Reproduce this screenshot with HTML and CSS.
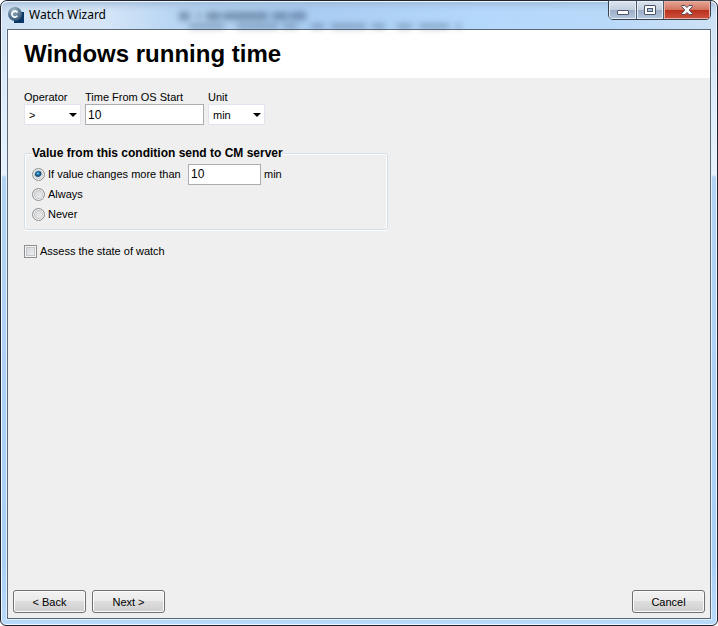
FILE: index.html
```html
<!DOCTYPE html>
<html lang="en">
<head>
<meta charset="utf-8">
<title>Watch Wizard</title>
<link rel="stylesheet" href="styles.css">
</head>
<body>
<div class="window">
  <header class="titlebar">
    <svg class="backdrop" width="300" height="26" viewBox="0 0 300 26" aria-hidden="true">
      <g fill="none" stroke="#3f5876">
        <path stroke-width="8" opacity=".55" d="M10 14H21M28 14H31M37 14H52M54 14H99M103 14H119M121 14H137"/>
        <path stroke-width="5" opacity=".6" d="M20 25H55M68 25H109M114 25H128M142 25H155M162 25H197M203 25H216M228 25H243M250 25H280M287 25H292"/>
      </g>
    </svg>
    <svg class="app-icon" width="16" height="16" viewBox="0 0 16 16" aria-hidden="true">
      <defs>
        <radialGradient id="ball" cx=".4" cy=".25" r=".8">
          <stop offset="0" stop-color="#a9bdcb"/>
          <stop offset=".5" stop-color="#65829b"/>
          <stop offset="1" stop-color="#2f5074"/>
        </radialGradient>
      </defs>
      <path fill="#0b3766" d="M6 5H16V16H6z"/>
      <circle cx="7" cy="7" r="7" fill="url(#ball)"/>
      <path fill="none" stroke="#fff" stroke-width="1.7" d="M9.4 5.4A3 3 0 1 0 9.4 8.8"/>
    </svg>
    <span class="caption">Watch Wizard</span>
    <div class="controls">
      <button class="control min" type="button" aria-label="Minimize">
        <svg width="12" height="5" viewBox="0 0 12 5"><rect x=".5" y=".5" width="11" height="4" rx=".5" fill="#fff" stroke="#4c566b"/></svg>
      </button>
      <button class="control max" type="button" aria-label="Maximize">
        <svg width="12" height="10" viewBox="0 0 12 10"><rect x=".5" y=".5" width="11" height="9" rx=".5" fill="#fff" stroke="#4c566b"/><rect x="3.5" y="3.5" width="5" height="3" fill="#a9c5df" stroke="#4c566b"/></svg>
      </button>
      <button class="control close" type="button" aria-label="Close">
        <svg width="12" height="10" viewBox="0 0 12 10"><path fill="#f7f7f7" stroke="#5a4a58" d="M.7 .5H4L6 2.5 8 .5H11.3V1.5L8.2 5 11.3 8.5V9.5H8L6 7.5 4 9.5H.7V8.5L3.8 5 .7 1.500z"/></svg>
      </button>
    </div>
  </header>
  <main class="client">
    <div class="heading"><h1>Windows running time</h1></div>
    <form class="content">
      <div class="fields">
        <div class="field">
          <label for="operator">Operator</label>
          <span class="combo"><select id="operator"><option>&gt;</option><option>&lt;</option><option>=</option></select></span>
        </div>
        <div class="field">
          <label for="time">Time From OS Start</label>
          <input class="text time" id="time" type="text" value="10">
        </div>
        <div class="field">
          <label for="unit">Unit</label>
          <span class="combo"><select id="unit"><option>min</option><option>hour</option></select></span>
        </div>
      </div>
      <fieldset class="group">
        <legend>Value from this condition send to CM server</legend>
        <div class="choice">
          <input type="radio" name="send" id="changes" checked>
          <label class="changes" for="changes">If value changes more than</label>
          <input class="text amount" id="amount" type="text" value="10">
          <label for="amount">min</label>
        </div>
        <div class="choice">
          <input type="radio" name="send" id="always">
          <label for="always">Always</label>
        </div>
        <div class="choice">
          <input type="radio" name="send" id="never">
          <label for="never">Never</label>
        </div>
      </fieldset>
      <div class="assess">
        <input type="checkbox" id="assess">
        <label for="assess">Assess the state of watch</label>
      </div>
    </form>
    <footer class="actions">
      <button class="push" type="button">&lt; Back</button>
      <button class="push" type="button">Next &gt;</button>
      <button class="push cancel" type="button">Cancel</button>
    </footer>
  </main>
</div>
</body>
</html>
```
FILE: styles.css
```css
* { box-sizing: border-box; }

body {
  margin: 0;
  background: #fff;
  color: #000;
  font: 11px/14px "Liberation Sans", Arial, sans-serif;
}

button, input, select { font: inherit; color: inherit; margin: 0; }

.window {
  display: flex;
  flex-direction: column;
  min-height: 100vh;
  padding: 0 6px 6px;
  border: 1px solid #20232e;
  border-radius: 7px 7px 6px 6px;
  background: linear-gradient(#cbdff3 0, #dcebfb 90px, #e6f1fd 174px, #b2d3f5 176px, #a9cff5 560px, #b9dbfb 100%);
  box-shadow: inset 0 0 0 1px #f2f8fe;
}

.titlebar {
  position: relative;
  display: flex;
  align-items: flex-start;
  height: 28px;
  margin: 0 -5px;
  padding-left: 6px;
  background: linear-gradient(90deg, #d3e4f5 0, #d6e6f7 100px, #b9d6f3 170px, #a9cdf2 300px, #b4d8fb 480px, #b9d9f9 610px, #cfe2f5 100%);
  box-shadow: inset 0 1px #eef6fe, inset 0 10px 9px -7px #9db6d4;
  border-radius: 6px 6px 0 0;
}

.backdrop {
  position: absolute;
  left: 167px;
  top: 1px;
  filter: blur(3px);
}

.app-icon { margin: 6px 5px 0 0; }

.caption {
  margin-top: 6px;
  font: 12px/16px "Noto Sans", "Open Sans", sans-serif;
}

.controls {
  display: flex;
  margin: -1px 5px 0 auto;
  height: 20px;
  border: 1px solid #39404d;
  border-radius: 0 0 5px 5px;
  overflow: hidden;
}

.control {
  display: grid;
  place-items: center;
  width: 27px;
  padding: 0;
  border: 0;
  border-right: 1px solid #4b586b;
  background: linear-gradient(#dce5ef 0, #c3cfde 48%, #9badc5 50%, #b6c8df 100%);
  box-shadow: inset 0 0 0 1px #e5edf6;
}

.min { width: 28px; }
.min svg { margin-top: 5px; }

.close {
  width: 46px;
  border-right: 0;
  background: linear-gradient(#e5a796 0, #d37360 48%, #b92f1b 50%, #cd5340 100%);
  box-shadow: inset 0 0 0 1px #eab1a3;
}

.client {
  flex: 1;
  display: flex;
  flex-direction: column;
  border: 1px solid #5b6976;
  background: #efefef;
  box-shadow: 0 0 0 1px #e3f1ff;
}

.heading { padding: 8px 16px; background: #fff; }

h1 { margin: 0; font-size: 24px; line-height: 32px; }

.content { flex: 1; padding: 12px 16px; }

.fields { display: flex; gap: 4px; }

.field { display: flex; flex-direction: column; }

.combo { position: relative; display: block; }

.combo::after {
  content: "";
  position: absolute;
  right: 4px;
  top: 9px;
  border: solid transparent;
  border-width: 4px 4px 0;
  border-top-color: #000;
  pointer-events: none;
}

select {
  display: block;
  appearance: none;
  width: 57px;
  height: 21px;
  padding: 0 4px;
  border: 1px solid #e2e3ee;
  border-radius: 1px;
  background: #fff;
}

.text {
  height: 21px;
  padding: 0 2px;
  border: 1px solid #abadb3;
  border-radius: 0;
  background: #fff;
  font-size: 12px;
}

.time { width: 119px; }
.amount { width: 73px; }

.group {
  width: 364px;
  margin: 21px 0 0;
  padding: 4px 7px 5px;
  border: 1px solid #d3dfe9;
  border-radius: 3px;
  box-shadow: inset 0 1px #fff, inset 1px 0 #fff, inset -1px 0 #fff, 0 1px #fff;
}

legend { padding: 0; background: #efefef; font-size: 12px; font-weight: bold; }

.choice { display: flex; align-items: center; gap: 3px; height: 20px; }

.changes { width: 137px; }

input[type="radio"], input[type="checkbox"] {
  appearance: none;
  flex: none;
  width: 13px;
  height: 13px;
  border: 1px solid #8e8f8f;
  box-shadow: inset 0 0 0 1px #f4f4f4, inset 0 0 0 2px #c3c7cb;
  background: linear-gradient(135deg, #cbcfd5, #f6f6f6);
}

input[type="radio"] { border-radius: 50%; }

input[type="radio"]:checked {
  background: radial-gradient(circle at 45% 40%, #9fe0f7 0, #2c8fc4 1px, #0d3f6b 3px, #dfe6ec 4px);
}

.assess { display: flex; align-items: center; gap: 3px; margin-top: 14px; }

.actions { display: flex; gap: 6px; padding: 5px; }

.push {
  width: 73px;
  height: 23px;
  padding: 0;
  border: 1px solid #707070;
  border-radius: 3px;
  background: linear-gradient(#f2f2f2 0, #ebebeb 48%, #dddddd 50%, #cfcfcf 100%);
  box-shadow: inset 0 0 0 1px #fbfbfb;
}

.cancel { margin-left: auto; }
```
